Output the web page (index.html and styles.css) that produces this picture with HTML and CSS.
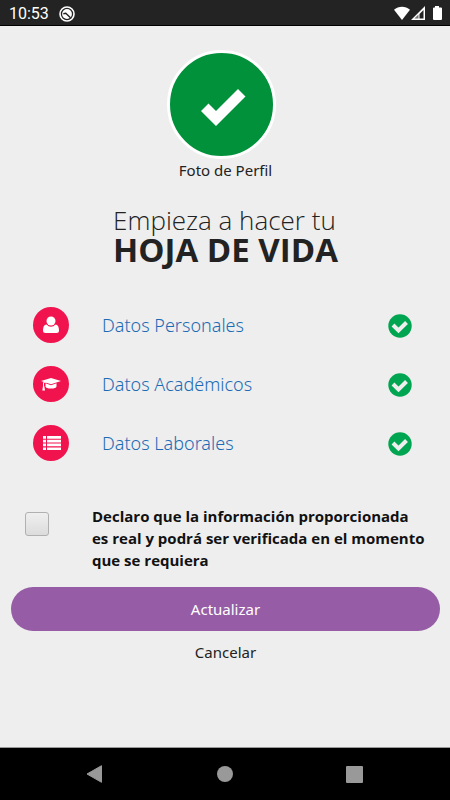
FILE: index.html
```html
<!DOCTYPE html>
<html lang="es">
<head>
<meta charset="utf-8">
<meta name="viewport" content="width=device-width, initial-scale=1">
<title>Hoja de vida</title>
<link rel="stylesheet" href="styles.css">
</head>
<body>
<header class="status">
  <div class="status-group">
    <span class="clock">10:53</span>
    <svg width="16" height="16" viewBox="0 0 16 16" aria-hidden="true">
      <circle cx="8" cy="8" r="7" fill="none" stroke="#fff" stroke-width="1.600"/>
      <circle cx="8" cy="8" r="4.900" fill="#fff"/>
      <path d="M4.300 7.800L6.800 7.300 11.500 11.800" fill="none" stroke="#232323" stroke-width="1.400"/>
    </svg>
  </div>
  <div class="status-group">
    <svg width="48" height="15" viewBox="0 0 48 15" aria-hidden="true">
      <path d="M0 3.700C4.500-.4 11.500-.4 16 3.700L8 14z" fill="#fff"/>
      <path d="M31 0V14H17zM29.500 4V12.600H25.500V8z" fill="#fff" fill-rule="evenodd"/>
      <path d="M24.500 8.500V12.600H20.400z" fill="#777"/>
      <path d="M41 0h4v1.500h2q1 0 1 1V13q0 1-1 1h-7q-1 0-1-1V2.500q0-1 1-1h1z" fill="#fff"/>
    </svg>
  </div>
</header>

<main class="page">
  <figure class="profile">
    <div class="avatar">
      <svg width="103" height="103" viewBox="0 0 103 103" aria-hidden="true">
        <path d="M31 58L38.500 50.500 46 58 68 36 75.500 43.500 46 73z" fill="#fff"/>
      </svg>
    </div>
    <figcaption>Foto de Perfil</figcaption>
  </figure>

  <h1 class="title">Empieza a hacer tu <strong>HOJA DE VIDA</strong></h1>

  <ul class="sections">
    <li class="section">
      <span class="badge">
        <svg width="18" height="18" viewBox="0 0 18 18" aria-hidden="true">
          <path d="M4.500 8.500Q6.500 10.800 9 10.800T13.500 8.500C16 8.900 17 11 17 14.500Q17 17 14.500 17H3.500Q1 17 1 14.500C1 11 2 8.900 4.500 8.500z" fill="#fff"/>
          <circle cx="9" cy="5" r="4.500" fill="#fff"/>
        </svg>
      </span>
      <a href="#personales">Datos Personales</a>
      <svg class="done" width="24" height="24" viewBox="0 0 24 24" role="img" aria-label="Completo"><circle cx="12" cy="12" r="11.700" fill="#00a551"/><path d="M5 11L10.500 16.500 18.500 8.500" fill="none" stroke="#eee" stroke-width="4"/></svg>
    </li>
    <li class="section">
      <span class="badge">
        <svg width="20" height="18" viewBox="0 0 20 18" aria-hidden="true">
          <path d="M0 6L10 3 20 6 10 9.200z" fill="#fff"/>
          <path d="M4.500 8.300L10 10.200 15.500 8.300V11.500Q15 13.600 10 13.600T4.500 11.500z" fill="#fff"/>
          <path d="M10 6L2.500 7.500V11.500" fill="none" stroke="#fff" stroke-width="1"/>
          <path d="M2 11H3.200L4 15.500H1.300z" fill="#fff"/>
        </svg>
      </span>
      <a href="#academicos">Datos Académicos</a>
      <svg class="done" width="24" height="24" viewBox="0 0 24 24" role="img" aria-label="Completo"><circle cx="12" cy="12" r="11.700" fill="#00a551"/><path d="M5 11L10.500 16.500 18.500 8.500" fill="none" stroke="#eee" stroke-width="4"/></svg>
    </li>
    <li class="section">
      <span class="badge">
        <svg width="20" height="18" viewBox="0 0 20 18" aria-hidden="true">
          <path d="M2 2h3v2.700H2zM6 2H20v2.700H6zM2 5.800h3v2.700H2zM6 5.800H20v2.700H6zM2 9.600h3v2.700H2zM6 9.600H20v2.700H6zM2 13.400h3v2.700H2zM6 13.400H20v2.700H6z" fill="#fff"/>
        </svg>
      </span>
      <a href="#laborales">Datos Laborales</a>
      <svg class="done" width="24" height="24" viewBox="0 0 24 24" role="img" aria-label="Completo"><circle cx="12" cy="12" r="11.700" fill="#00a551"/><path d="M5 11L10.500 16.500 18.500 8.500" fill="none" stroke="#eee" stroke-width="4"/></svg>
    </li>
  </ul>

  <form class="form">
    <div class="consent">
      <input type="checkbox" id="declaro">
      <label for="declaro">Declaro que la información proporcionada<br>es real y podrá ser verificada en el momento<br>que se requiera</label>
    </div>
    <button class="primary" type="button">Actualizar</button>
    <button class="cancel" type="button">Cancelar</button>
  </form>
</main>

<nav class="navbar" aria-label="Sistema">
  <button type="button" aria-label="Atrás"><svg width="18" height="20" viewBox="0 0 18 20"><path d="M1 10L15.500 1.700V18.300z" fill="#999" stroke="#999" stroke-linejoin="round"/></svg></button>
  <button type="button" aria-label="Inicio"><svg width="18" height="18" viewBox="0 0 18 18"><circle cx="9" cy="9" r="8" fill="#999"/></svg></button>
  <button type="button" aria-label="Recientes"><svg width="18" height="18" viewBox="0 0 18 18"><rect x="0" y="1" width="17" height="17" rx="1" fill="#999"/></svg></button>
</nav>
</body>
</html>
```

FILE: styles.css
```css
* {
  box-sizing: border-box;
}

body {
  margin: 0;
  min-height: 100vh;
  display: flex;
  flex-direction: column;
  background: #eee;
  color: #222;
  font-family: "Noto Sans", "Open Sans", sans-serif;
  font-size: 15px;
  line-height: 22px;
}

button {
  border: 0;
  padding: 0;
  background: none;
  color: inherit;
  font: inherit;
}

svg {
  display: block;
  flex: none;
}

.status {
  display: flex;
  justify-content: space-between;
  align-items: center;
  height: 26px;
  padding: 2px 8px 0 9px;
  border-bottom: 1px solid #000;
  background: #232323;
  color: #fff;
}

.status-group {
  display: flex;
  align-items: center;
  gap: 10px;
}

.clock {
  font-family: Roboto, sans-serif;
  font-size: 16px;
}

.page {
  flex: 1;
  padding: 24px 10px 0 11px;
}

.profile {
  display: flex;
  flex-direction: column;
  align-items: center;
  margin: 0;
}

.avatar {
  margin-right: 8px;
  border: 3px solid #fff;
  border-radius: 50%;
  background: #00913a;
}

.title {
  width: fit-content;
  margin: 24px auto 0;
  font-family: "Open Sans", sans-serif;
  font-size: 26px;
  font-weight: 300;
  line-height: 30px;
}

.title strong {
  display: block;
  font-size: 33px;
  font-weight: 700;
}

.sections {
  display: grid;
  gap: 23px;
  margin: 42px 0 0;
  padding: 0 28px 0 22px;
  list-style: none;
}

.section {
  display: flex;
  align-items: center;
}

.badge {
  display: grid;
  place-items: center;
  width: 36px;
  height: 36px;
  margin-right: 33px;
  border-radius: 50%;
  background: #f0134d;
}

.section a {
  flex: 1;
  color: #1b6bb5;
  font-size: 18px;
  font-weight: 300;
  text-decoration: none;
}

.done {
  margin-top: 2px;
}

.form {
  display: flex;
  flex-direction: column;
  margin-top: 44px;
}

.consent {
  display: flex;
  align-items: flex-start;
  gap: 43px;
  padding-left: 14px;
}

.consent input {
  appearance: none;
  flex: none;
  width: 24px;
  height: 24px;
  margin: 7px 0 0;
  border: 1px solid #b0b0b0;
  border-radius: 3px;
  background: linear-gradient(#efefef, #dcdcdc);
}

.consent label {
  color: #111;
  font-family: "Open Sans", sans-serif;
  font-weight: 700;
}

.primary {
  height: 44px;
  margin-top: 16px;
  border-radius: 22px;
  background: #965da6;
  color: #fff;
}

.cancel {
  align-self: center;
  margin-top: 10px;
}

.navbar {
  display: flex;
  justify-content: space-around;
  align-items: center;
  height: 53px;
  padding: 0 30px;
  border-top: 1px solid #999;
  background: #000;
}
```
